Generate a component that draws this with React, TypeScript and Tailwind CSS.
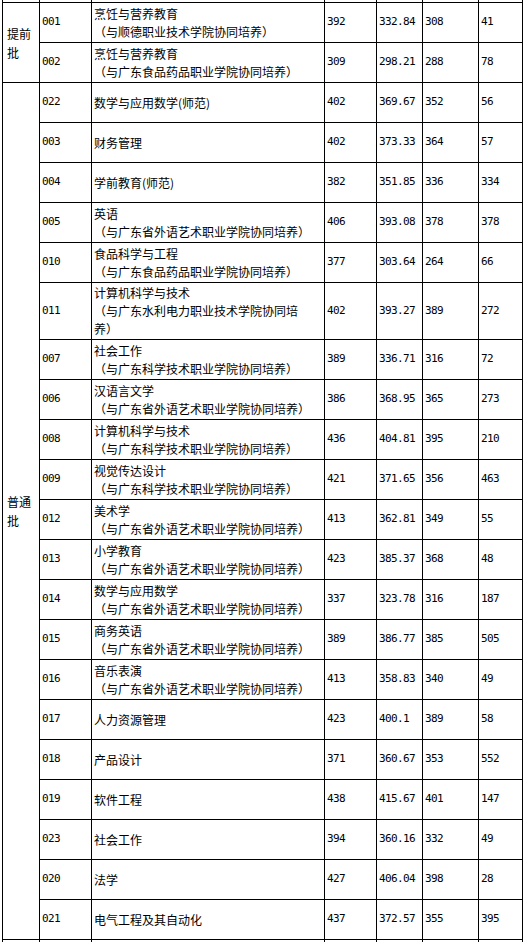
import React from "react";

// 录取分数表（截图裁掉了表头，上下各露出一条边）
type Row = {
  code: string;
  major: string;
  sub?: string;
  max: string;
  avg: string;
  min: string;
  rank: string;
};

const EARLY: Row[] = [
  { code: "001", major: "烹饪与营养教育", sub: "（与顺德职业技术学院协同培养）", max: "392", avg: "332.84", min: "308", rank: "41" },
  { code: "002", major: "烹饪与营养教育", sub: "（与广东食品药品职业学院协同培养）", max: "309", avg: "298.21", min: "288", rank: "78" },
];

const NORMAL: Row[] = [
  { code: "022", major: "数学与应用数学(师范)", max: "402", avg: "369.67", min: "352", rank: "56" },
  { code: "003", major: "财务管理", max: "402", avg: "373.33", min: "364", rank: "57" },
  { code: "004", major: "学前教育(师范)", max: "382", avg: "351.85", min: "336", rank: "334" },
  { code: "005", major: "英语", sub: "（与广东省外语艺术职业学院协同培养）", max: "406", avg: "393.08", min: "378", rank: "378" },
  { code: "010", major: "食品科学与工程", sub: "（与广东食品药品职业学院协同培养）", max: "377", avg: "303.64", min: "264", rank: "66" },
  { code: "011", major: "计算机科学与技术", sub: "（与广东水利电力职业技术学院协同培养）", max: "402", avg: "393.27", min: "389", rank: "272" },
  { code: "007", major: "社会工作", sub: "（与广东科学技术职业学院协同培养）", max: "389", avg: "336.71", min: "316", rank: "72" },
  { code: "006", major: "汉语言文学", sub: "（与广东省外语艺术职业学院协同培养）", max: "386", avg: "368.95", min: "365", rank: "273" },
  { code: "008", major: "计算机科学与技术", sub: "（与广东科学技术职业学院协同培养）", max: "436", avg: "404.81", min: "395", rank: "210" },
  { code: "009", major: "视觉传达设计", sub: "（与广东科学技术职业学院协同培养）", max: "421", avg: "371.65", min: "356", rank: "463" },
  { code: "012", major: "美术学", sub: "（与广东省外语艺术职业学院协同培养）", max: "413", avg: "362.81", min: "349", rank: "55" },
  { code: "013", major: "小学教育", sub: "（与广东省外语艺术职业学院协同培养）", max: "423", avg: "385.37", min: "368", rank: "48" },
  { code: "014", major: "数学与应用数学", sub: "（与广东省外语艺术职业学院协同培养）", max: "337", avg: "323.78", min: "316", rank: "187" },
  { code: "015", major: "商务英语", sub: "（与广东省外语艺术职业学院协同培养）", max: "389", avg: "386.77", min: "385", rank: "505" },
  { code: "016", major: "音乐表演", sub: "（与广东省外语艺术职业学院协同培养）", max: "413", avg: "358.83", min: "340", rank: "49" },
  { code: "017", major: "人力资源管理", max: "423", avg: "400.1", min: "389", rank: "58" },
  { code: "018", major: "产品设计", max: "371", avg: "360.67", min: "353", rank: "552" },
  { code: "019", major: "软件工程", max: "438", avg: "415.67", min: "401", rank: "147" },
  { code: "023", major: "社会工作", max: "394", avg: "360.16", min: "332", rank: "49" },
  { code: "020", major: "法学", max: "427", avg: "406.04", min: "398", rank: "28" },
  { code: "021", major: "电气工程及其自动化", max: "437", avg: "372.57", min: "355", rank: "395" },
];

const NUM = "flex items-center bg-white pl-[2px] text-[11px] tracking-[-0.6px] font-[family-name:'DejaVu_Sans_Mono',monospace]";

function Blank() {
  // 被裁掉的表头/表尾，只剩竖线
  return (
    <>
      {Array.from({ length: 7 }).map((_, i) => (
        <div key={i} className="bg-white" />
      ))}
    </>
  );
}

function Cells({ row }: { row: Row }) {
  return (
    <>
      <div className={NUM}>{row.code}</div>
      <div className="flex flex-col justify-center bg-white pl-[2px] pr-[10px] text-[12px] leading-[18px]">
        <span>{row.major}</span>
        {row.sub && <span>{row.sub}</span>}
      </div>
      <div className={NUM}>{row.max}</div>
      <div className={NUM}>{row.avg}</div>
      <div className={NUM}>{row.min}</div>
      <div className={NUM}>{row.rank}</div>
    </>
  );
}

export default function App() {
  return (
    <div className="min-h-[942px] w-[525px] overflow-hidden bg-white text-black font-[family-name:'Noto_Sans_CJK_SC',sans-serif]">
      <div className="ml-[2px] grid w-[521px] grid-cols-[36px_51px_232px_51px_45px_55px_43px] grid-rows-[2px_repeat(7,39px)_56px_repeat(15,39px)_20px] gap-px bg-black px-px">
        <Blank />

        <div className="row-span-2 flex items-center bg-white pl-1 pr-1 text-[12px] leading-[19px]">提前批</div>
        {EARLY.map((r) => (
          <Cells key={r.code} row={r} />
        ))}

        <div className="row-[span_21/span_21] flex items-center bg-white pl-1 pr-1 text-[12px] leading-[19px]">普通批</div>
        {NORMAL.map((r) => (
          <Cells key={r.code} row={r} />
        ))}

        <Blank />
      </div>
    </div>
  );
}
